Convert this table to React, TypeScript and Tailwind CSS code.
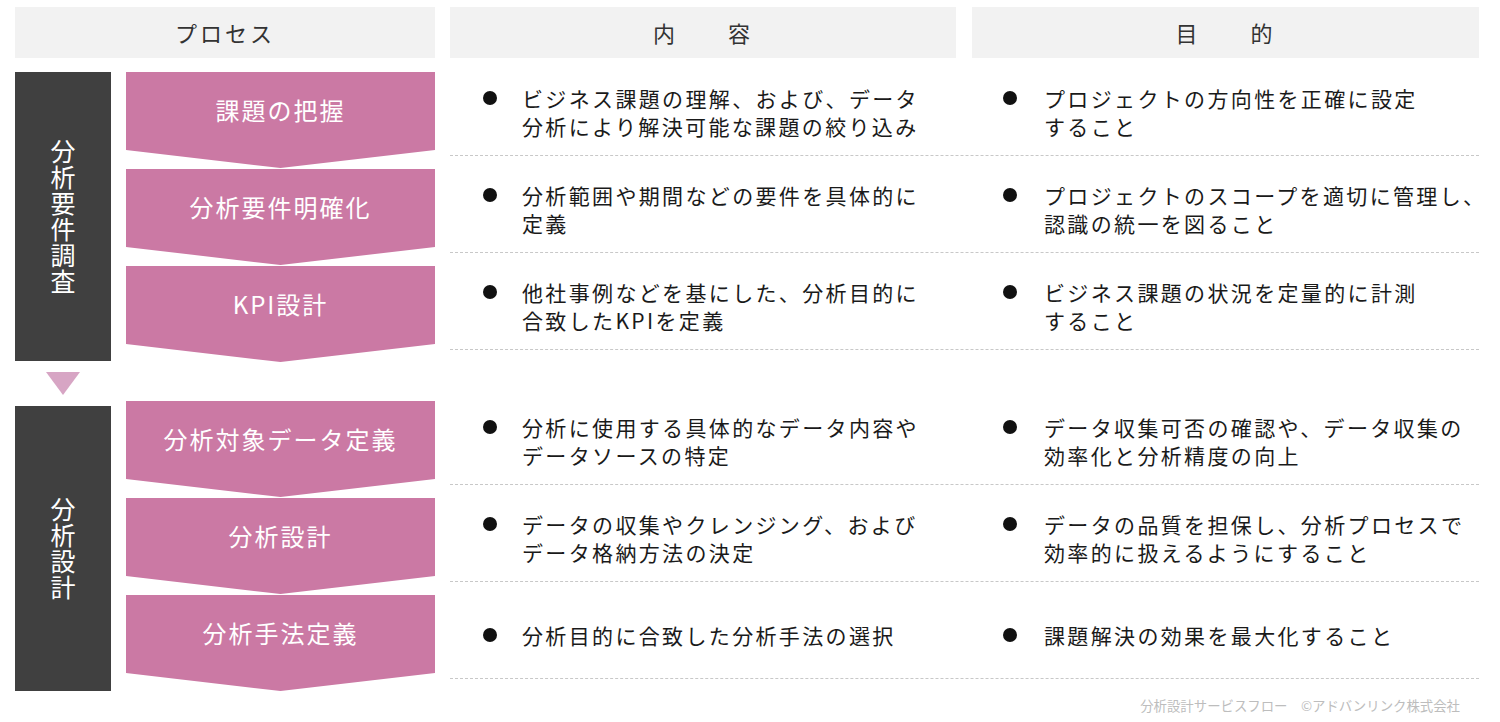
const groups = [
  {
    label: "分析要件調査",
    barClass: "h-[289px]",
    rows: [
      {
        step: "課題の把握",
        content: ["ビジネス課題の理解、および、データ", "分析により解決可能な課題の絞り込み"],
        purpose: ["プロジェクトの方向性を正確に設定", "すること"],
      },
      {
        step: "分析要件明確化",
        content: ["分析範囲や期間などの要件を具体的に", "定義"],
        purpose: ["プロジェクトのスコープを適切に管理し、", "認識の統一を図ること"],
      },
      {
        step: "KPI設計",
        content: ["他社事例などを基にした、分析目的に", "合致したKPIを定義"],
        purpose: ["ビジネス課題の状況を定量的に計測", "すること"],
      },
    ],
  },
  {
    label: "分析設計",
    barClass: "mt-[5px] h-[285px]",
    rows: [
      {
        step: "分析対象データ定義",
        content: ["分析に使用する具体的なデータ内容や", "データソースの特定"],
        purpose: ["データ収集可否の確認や、データ収集の", "効率化と分析精度の向上"],
      },
      {
        step: "分析設計",
        content: ["データの収集やクレンジング、および", "データ格納方法の決定"],
        purpose: ["データの品質を担保し、分析プロセスで", "効率的に扱えるようにすること"],
      },
      {
        step: "分析手法定義",
        content: ["分析目的に合致した分析手法の選択"],
        purpose: ["課題解決の効果を最大化すること"],
      },
    ],
  },
];

function Bullet({ lines, dotClass }: { lines: string[]; dotClass: string }) {
  return (
    <div className="flex items-start">
      <div className={`mt-[7px] h-[14px] w-[14px] shrink-0 rounded-full bg-[#111] ${dotClass}`} />
      <p className="text-[21px] leading-[28px] tracking-[2.35px] text-[#1a1a1a] whitespace-nowrap">
        {lines.map((line, i) => (
          <span key={i} className="block">
            {line}
          </span>
        ))}
      </p>
    </div>
  );
}

function Row({ row }: { row: (typeof groups)[number]["rows"][number] }) {
  return (
    <div className="flex items-start">
      <div className="mb-[1px] flex h-[96px] w-[309px] shrink-0 justify-center bg-[#cb79a4] pt-[20px] [clip-path:polygon(0_0,100%_0,100%_78px,50%_100%,0_78px)]">
        <span className="text-[24px] leading-[36px] tracking-[2px] text-white">{row.step}</span>
      </div>
      <div className="ml-[15px] flex h-[84px] w-[1029px] items-center border-b border-dashed border-[#c8c8c8] pb-[4px]">
        <div className="w-[506px] pl-[33px]">
          <Bullet lines={row.content} dotClass="mr-[25px]" />
        </div>
        <div className="ml-[16px] w-[507px] pl-[31px]">
          <Bullet lines={row.purpose} dotClass="mr-[27px]" />
        </div>
      </div>
    </div>
  );
}

export default function App() {
  return (
    <div className="h-[722px] w-[1500px] bg-white px-[15px] pt-[7px] font-['Noto_Sans_CJK_JP','Noto_Sans',sans-serif]">
      <div className="flex text-[22px] tracking-[3px] text-[#333]">
        <div className="flex h-[51px] w-[420px] items-center justify-center bg-[#f2f2f2]">プロセス</div>
        <div className="ml-[15px] flex h-[51px] w-[506px] items-center justify-center bg-[#f2f2f2]">
          内　　容
        </div>
        <div className="ml-[16px] flex h-[51px] w-[507px] items-center justify-center bg-[#f2f2f2]">
          目　　的
        </div>
      </div>

      <div className="mt-[14px]">
        {groups.map((group, gi) => (
          <div key={gi}>
            {gi > 0 && (
              <div className="h-[38px] pl-[31px] pt-[9px]">
                <svg width="34" height="23" viewBox="0 0 34 23">
                  <polygon points="0,0 34,0 17,23" fill="#d7a5c4" />
                </svg>
              </div>
            )}
            <div className="flex items-start">
              <div
                className={`flex w-[96px] shrink-0 items-center justify-center bg-[#404040] ${group.barClass}`}
              >
                <span className="text-[25px] leading-[26px] tracking-[1px] text-white [writing-mode:vertical-rl]">
                  {group.label}
                </span>
              </div>
              <div className="ml-[15px]">
                {group.rows.map((row, ri) => (
                  <Row key={ri} row={row} />
                ))}
              </div>
            </div>
          </div>
        ))}
      </div>

      <div className="mt-[3px] pr-[25px] text-right text-[13.4px] text-[#bdbdbd]">
        分析設計サービスフロー　©アドバンリンク株式会社
      </div>
    </div>
  );
}
